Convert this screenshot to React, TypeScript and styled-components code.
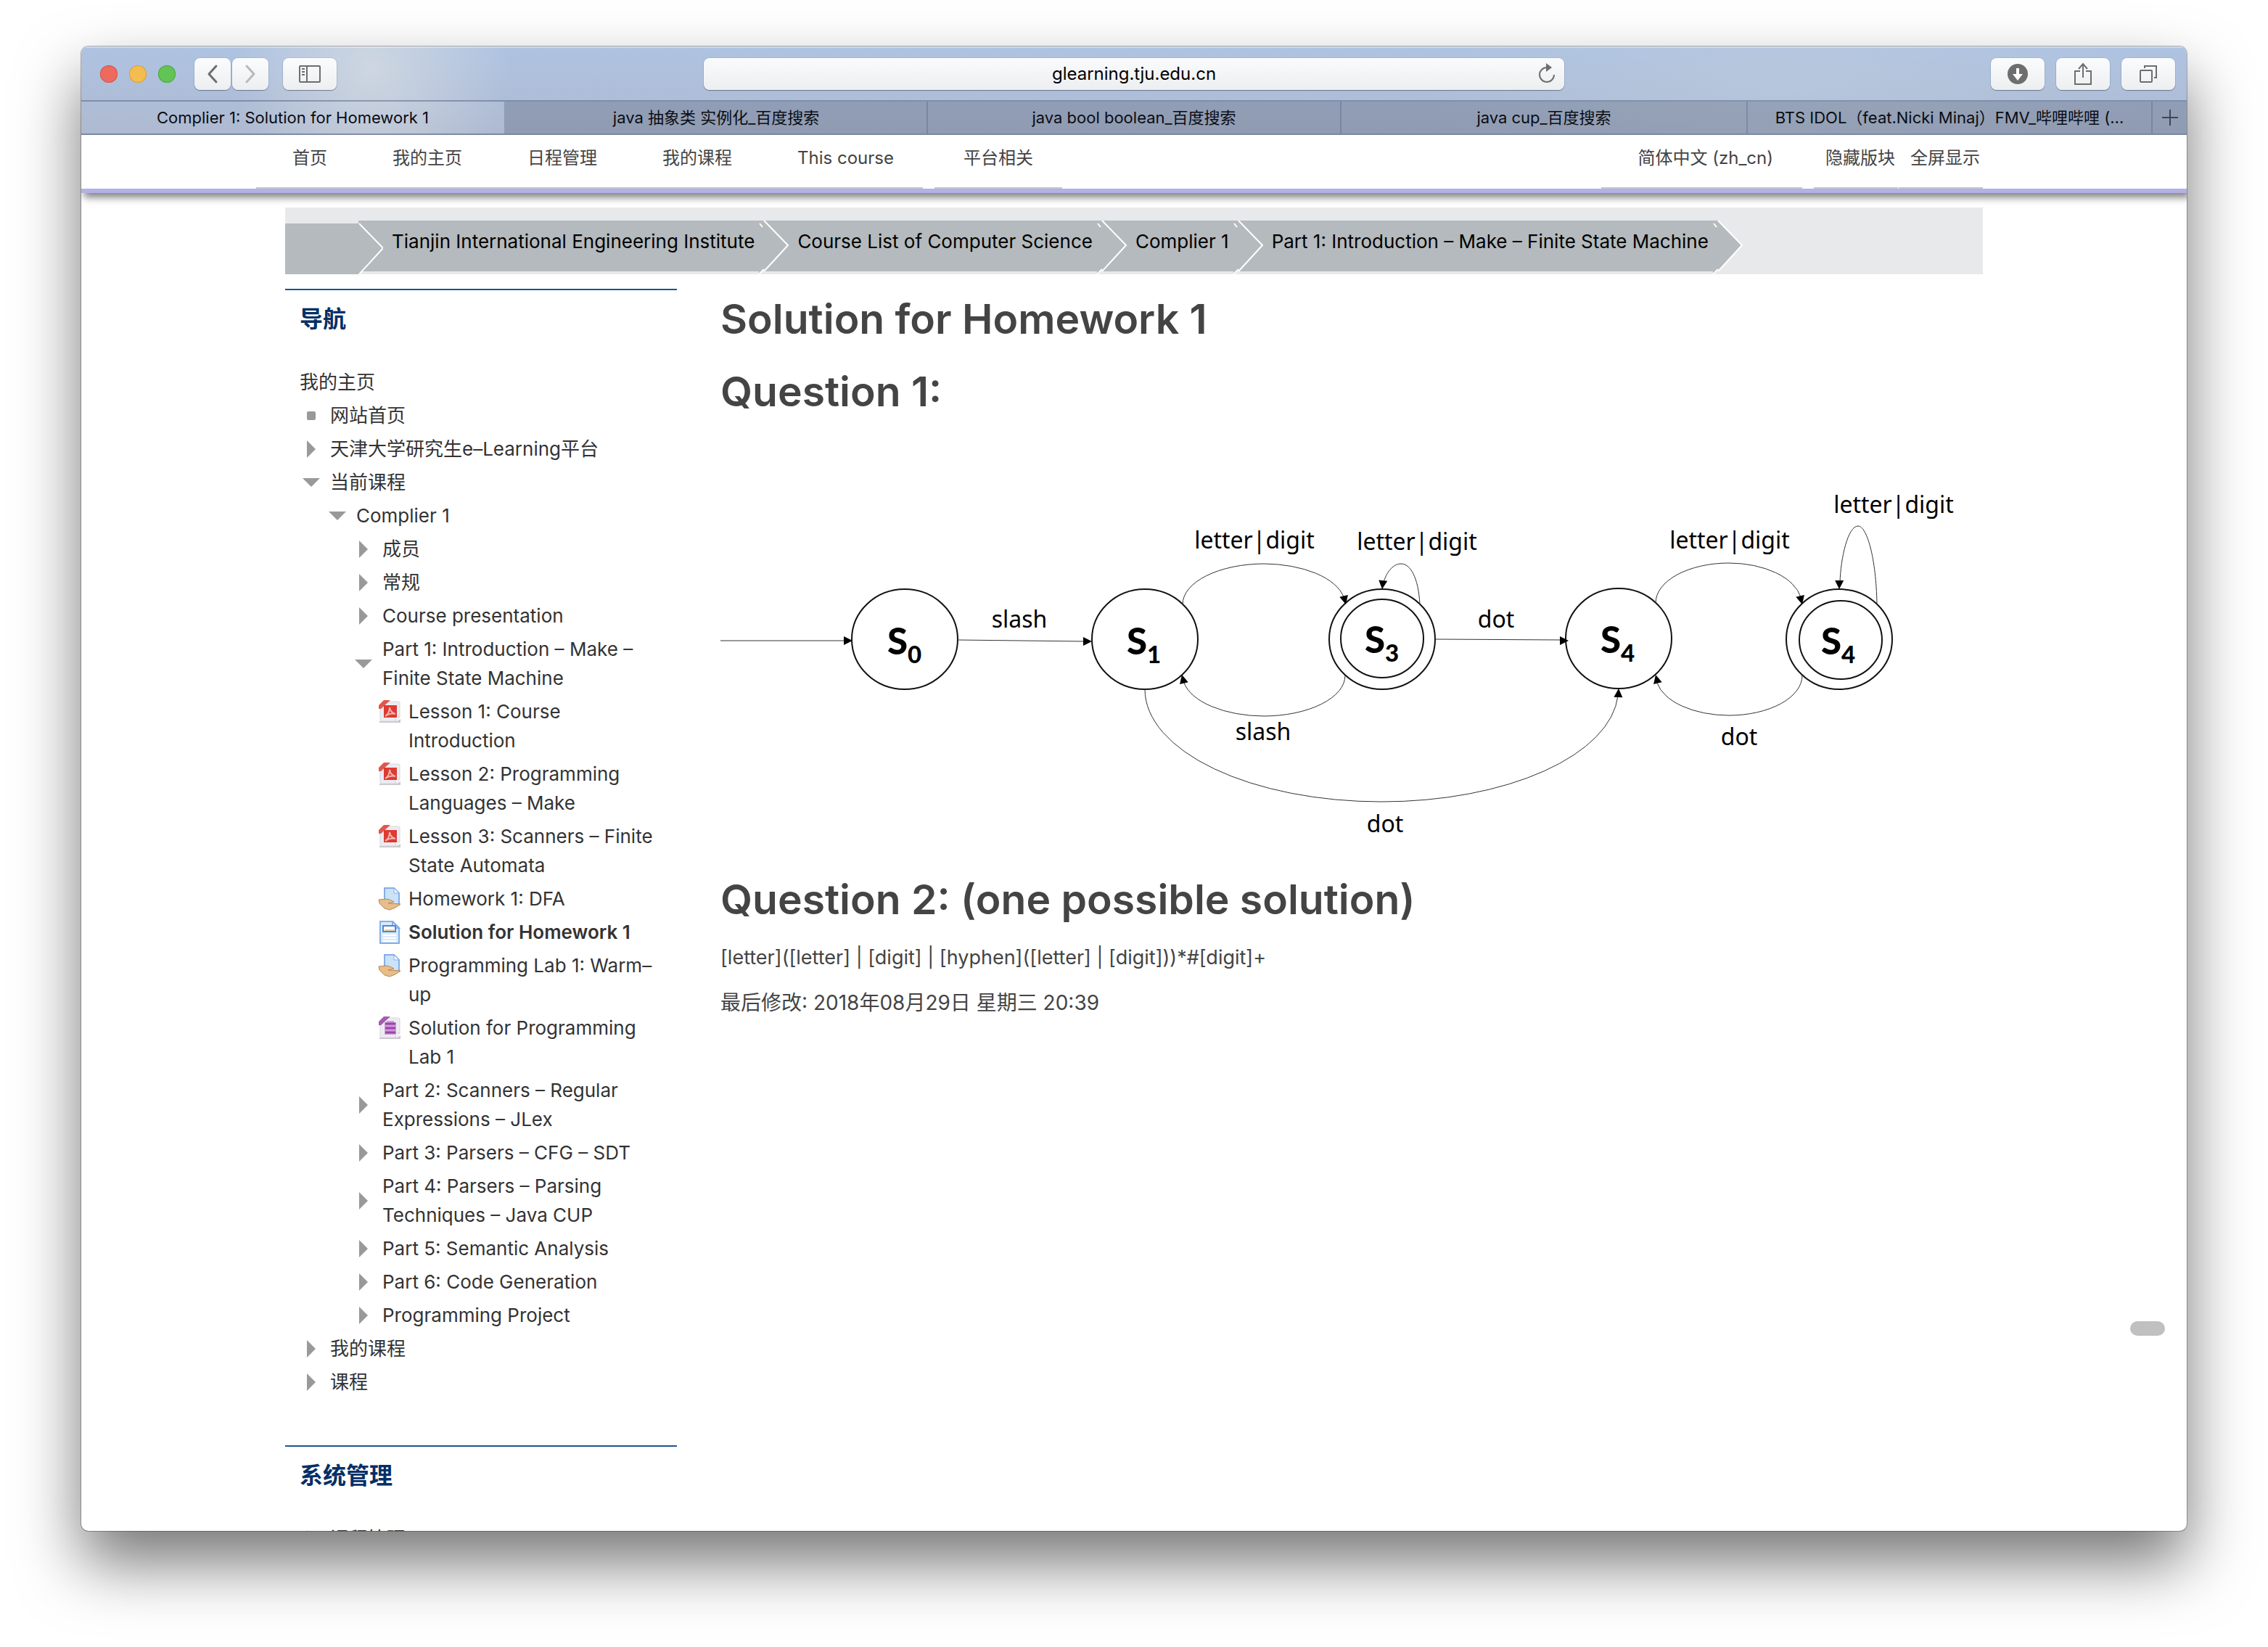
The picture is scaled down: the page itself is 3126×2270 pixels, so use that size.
import React from "react";
import styled, { createGlobalStyle } from "styled-components";

const UI_FONT = `Inter, "Noto Sans CJK SC", "Liberation Sans", sans-serif`;
const STATE_FONT = `Lato, "Noto Sans", sans-serif`;
const LABEL_FONT = `"Noto Sans", "Open Sans", sans-serif`;

const GlobalStyle = createGlobalStyle`
  *, *::before, *::after { box-sizing: border-box; }
  body { margin: 0; background: #fff; font-family: ${UI_FONT}; color: #333; }
  h1, h2, h3, p, ul, ol { margin: 0; padding: 0; }
  ul, ol { list-style: none; }
  a { color: inherit; text-decoration: none; }
  button, input { font: inherit; color: inherit; border: 0; padding: 0; background: none; }
  svg { display: block; }
`;

/* ---------- window ---------- */

const Desktop = styled.div`
  display: flex;
  flex-direction: column;
  height: 100vh;
  padding: 64px 112px 160px;
  overflow: hidden;
`;

const BrowserWindow = styled.div`
  position: relative;
  flex: 1;
  min-height: 0;
  display: flex;
  flex-direction: column;
  overflow: hidden;
  border-radius: 10px;
  background: #fff;
  box-shadow:
    0 0 0 1px rgba(0, 0, 0, 0.28),
    0 44px 88px rgba(0, 0, 0, 0.54);
`;

const Chrome = styled.header`
  flex: none;
  background:
    radial-gradient(ellipse 190px 190px at 400px 30px, rgba(216, 221, 226, 0.75), rgba(205, 208, 212, 0) 100%),
    radial-gradient(ellipse 500px 160px at 2350px 50px, rgba(190, 204, 220, 0.55), rgba(190, 204, 220, 0) 100%),
    linear-gradient(#aec3e2, #aebad0);
`;

const Toolbar = styled.div`
  display: grid;
  grid-template-columns: 1fr minmax(400px, 1186px) 1fr;
  align-items: center;
  height: 74px;
  padding: 2px 16px 0;
  box-shadow: inset 0 2px 0 rgba(255, 255, 255, 0.35);
`;

const ToolGroup = styled.div<{ $end?: boolean }>`
  display: flex;
  align-items: center;
  gap: 16px;
  justify-content: ${(p) => (p.$end ? "flex-end" : "flex-start")};
`;

const TrafficLights = styled.div`
  display: flex;
  gap: 16px;
  margin: 0 10px;
`;

const Light = styled.button<{ $fill: string; $ring: string }>`
  width: 24px;
  height: 24px;
  border-radius: 50%;
  background: ${(p) => p.$fill};
  box-shadow: inset 0 0 0 1px ${(p) => p.$ring};
`;

const Segmented = styled.div`
  display: flex;
  gap: 2px;
  margin-right: 4px;
`;

const ToolButton = styled.button<{ $narrow?: boolean }>`
  display: grid;
  place-items: center;
  width: ${(p) => (p.$narrow ? 50 : 74)}px;
  height: 44px;
  border-radius: 8px;
  background: linear-gradient(#fbfcfe, #eceef0);
  box-shadow: 0 1px 1px rgba(60, 70, 95, 0.55), 0 0 0 1px rgba(90, 110, 150, 0.15);
  color: #6e6e6e;
`;

const AddressBar = styled.form`
  display: grid;
  grid-template-columns: 48px 1fr 48px;
  align-items: center;
  height: 44px;
  border-radius: 8px;
  background: linear-gradient(#fafbfd, #eceef0);
  box-shadow: 0 1px 1px rgba(60, 70, 95, 0.55), 0 0 0 1px rgba(90, 110, 150, 0.15);
`;

const AddressInput = styled.input`
  grid-column: 2;
  min-width: 0;
  text-align: center;
  font-size: 24px;
  line-height: 40px;
  color: #000;
  outline: none;
`;

const ReloadButton = styled.button`
  display: grid;
  place-items: center;
  height: 44px;
  color: #6e6e6e;
`;

const TabStrip = styled.div`
  display: grid;
  grid-template-columns: 585fr 582fr 570fr 560fr 558fr 47px;
  height: 48px;
  border-top: 2px solid rgba(70, 85, 120, 0.45);
  border-bottom: 2px solid rgba(70, 85, 120, 0.5);
`;

const Tab = styled.button<{ $active?: boolean }>`
  min-width: 0;
  padding: 0 20px;
  overflow: hidden;
  text-overflow: ellipsis;
  white-space: nowrap;
  font-size: 22px;
  line-height: 44px;
  color: #0a0c14;
  background: ${(p) => (p.$active ? "transparent" : "rgba(50, 60, 80, 0.24)")};
  border-right: 2px solid rgba(70, 85, 120, 0.3);
`;

const NewTab = styled(Tab)`
  display: grid;
  place-items: center;
  padding: 0;
  border-right: 0;
  color: #3e4654;
`;

/* ---------- page ---------- */

const Viewport = styled.div`
  flex: 1;
  min-height: 0;
  overflow: hidden;
`;

const ScrollThumb = styled.div`
  position: absolute;
  right: 30px;
  bottom: 269px;
  width: 48px;
  height: 20px;
  border-radius: 10px;
  background: #c0c0c0;
`;

const SiteBar = styled.div`
  border-bottom: 6px solid #b3b1e6;
  box-shadow: 4px 6px 10px rgba(0, 0, 0, 0.5);
`;

const Container = styled.div`
  width: min(100% - 160px, 2340px);
  margin: 0 auto;
`;

const SiteNav = styled(Container).attrs({ as: "nav" })`
  display: flex;
  gap: 16px;
  height: 74px;
  font-size: 24px;
  line-height: 40px;
  color: #444;
  white-space: nowrap;
`;

const MenuGroup = styled.div<{ $first?: boolean; $right?: boolean }>`
  display: flex;
  gap: 90px;
  padding: 12px 40px 0 ${(p) => (p.$first || p.$right ? 50 : 40)}px;
  margin-left: ${(p) => (p.$first ? "-40px" : p.$right ? "auto" : "0")};
  border-bottom: 2px solid #c8c8c8;
`;

const ToggleGroup = styled.div`
  display: flex;
  gap: 1px;
`;

const ToggleLink = styled.a`
  padding: 12px 4px 0 16px;
  border-bottom: 2px solid #c8c8c8;
`;

const Breadcrumb = styled.ol`
  display: flex;
  align-items: stretch;
  height: 92px;
  margin-top: 20px;
  padding-top: 18px;
  background: #e8e9eb;
  overflow: hidden;
`;

const Crumb = styled.li`
  display: flex;
  flex: none;
`;

const CrumbLink = styled.a`
  height: 70px;
  padding: 0 6px 0 12px;
  background: #b4babd;
  font-size: 26px;
  line-height: 58px;
  color: #000;
  white-space: nowrap;
`;

const CrumbRoot = styled.a`
  width: 101px;
  height: 70px;
  margin-top: 4px;
  background: #b4babd;
`;

const Columns = styled.div`
  display: grid;
  grid-template-columns: 540px minmax(0, 1fr);
  gap: 60px;
  margin-top: 20px;
`;

const Block = styled.section`
  padding: 20px;
  margin-bottom: 47px;
  border-top: 2px solid #1c5490;
`;

const BlockTitle = styled.h2`
  margin-bottom: 47px;
  font-size: 32px;
  font-weight: 700;
  line-height: 40px;
  color: #042f66;
`;

const Tree = styled.ul<{ $nested?: boolean }>`
  display: flex;
  flex-direction: column;
  gap: 6px;
  padding-left: ${(p) => (p.$nested ? 36 : 0)}px;
  margin-top: ${(p) => (p.$nested ? 6 : 0)}px;
  font-size: 26px;
  line-height: 40px;
  color: #333;
`;

const TreeRow = styled.div<{ $top?: boolean }>`
  display: grid;
  grid-template-columns: 32px 1fr;
  column-gap: 10px;
  align-items: ${(p) => (p.$top ? "start" : "center")};
`;

const Marker = styled.span`
  display: grid;
  place-items: center;
  height: 40px;
`;

const TreeLink = styled.a<{ $current?: boolean }>`
  font-weight: ${(p) => (p.$current ? 600 : 400)};
`;

const Article = styled.main`
  padding-top: 2px;
  color: #444;
`;

const Heading = styled.h1`
  margin-bottom: 20px;
  font-size: 57px;
  font-weight: 600;
  line-height: 80px;
`;

const Diagram = styled.svg`
  width: 100%;
  height: auto;
  margin: 62px 0 18px;
`;

const Paragraph = styled.p`
  margin-bottom: 22px;
  font-size: 27px;
  line-height: 40px;
`;

const ModifiedNote = styled(Paragraph)`
  font-size: 28px;
`;

const StateName = styled.text`
  font: 900 51px ${STATE_FONT};
`;

const StateIndex = styled.tspan`
  font-size: 33px;
`;

const EdgeLabel = styled.text`
  font: 400 32px ${LABEL_FONT};
  text-anchor: middle;
`;

/* ---------- icons ---------- */

const Chevron = ({ forward }: { forward?: boolean }) => (
  <svg width="16" height="28" viewBox="0 0 16 28" fill="none" stroke={forward ? "#b9b9bb" : "#6e6e6e"} strokeWidth="3" strokeLinecap="round" strokeLinejoin="round">
    <path d={forward ? "M3 3 L13 14 L3 25" : "M13 3 L3 14 L13 25"} />
  </svg>
);

const SidebarIcon = () => (
  <svg width="32" height="26" viewBox="0 0 32 26" fill="none" stroke="currentColor" strokeWidth="2">
    <rect x="2" y="2" width="28" height="22" rx="1" />
    <path d="M12 2 V24 M5 6 H9 M5 10 H9 M5 14 H9" />
  </svg>
);

const DownloadIcon = () => (
  <svg width="30" height="30" viewBox="0 0 30 30">
    <circle cx="15" cy="15" r="14" fill="currentColor" />
    <path d="M13 7 H17 V15 H22 L15 24 L8 15 H13 Z" fill="#fff" />
  </svg>
);

const ShareIcon = () => (
  <svg width="26" height="32" viewBox="0 0 26 32" fill="none" stroke="currentColor" strokeWidth="2">
    <path d="M9 12 H2 V30 H24 V12 H17 M13 21 V3 M7 9 L13 2 L19 9" />
  </svg>
);

const TabsIcon = () => (
  <svg width="26" height="26" viewBox="0 0 26 26" fill="none" stroke="currentColor" strokeWidth="2">
    <rect x="2" y="8" width="16" height="16" rx="1" />
    <path d="M8 5 V2 H24 V18 H21" />
  </svg>
);

const ReloadIcon = () => (
  <svg width="26" height="30" viewBox="0 0 26 30">
    <path d="M13 6 A10 10 0 1 0 23 16" fill="none" stroke="currentColor" strokeWidth="2" />
    <path d="M12 0 L20 6 L12 12 Z" fill="currentColor" />
  </svg>
);

const PlusIcon = () => (
  <svg width="24" height="24" viewBox="0 0 24 24" stroke="currentColor" strokeWidth="2">
    <path d="M12 1 V23 M1 12 H23" />
  </svg>
);

const RootArrow = () => (
  <svg width="34" height="74" viewBox="0 0 34 74">
    <rect width="34" height="70" fill="#b4babd" />
    <path d="M0 4 L34 38 L0 74 Z" fill="#b4babd" />
    <path d="M1 4 L34 38 L1 74" fill="none" stroke="#fff" strokeWidth="2" />
  </svg>
);

const CrumbArrow = ({ last }: { last?: boolean }) => (
  <svg width="41" height="74" viewBox="0 0 41 74">
    {last ? <path d="M0 0 H7 L41 34 L7 70 H0 Z" fill="#b4babd" /> : <rect width="41" height="70" fill="#b4babd" />}
    <path d="M0 70 H4 L0 74 Z" fill="#b4babd" />
    <path d="M7 0 L40 34 L7 70 M1 4 L5 9 M0 74 L7 67" fill="none" stroke="#fff" strokeWidth="2" />
  </svg>
);

type IconKind = "leaf" | "closed" | "open" | "pdf" | "assign" | "page" | "archive";

const FileBase = ({ color }: { color: string }) => (
  <>
    <path d="M2 29 H26 L31 26 V31 H2 Z" fill="#c9c9cd" />
    <path d="M7 2 H28 Q30 2 30 4 V23 L24 29 H5 Q3 29 3 27 V8 Z" fill="#ececf2" stroke="#d6d6dc" />
    <path d="M24 29 V23 H30 Z" fill="#fff" stroke="#d0d0d6" />
    <path d="M1 12 V7 L8 0 H17 L4 12 Z" fill={color} />
  </>
);

const TreeIcon = ({ kind }: { kind: IconKind }) => {
  switch (kind) {
    case "leaf":
      return <svg width="12" height="12"><rect width="12" height="12" rx="2" fill="#999" /></svg>;
    case "closed":
      return <svg width="12" height="24"><path d="M0 0 L12 12 L0 24 Z" fill="#999" /></svg>;
    case "open":
      return <svg width="24" height="12"><path d="M0 0 H24 L12 12 Z" fill="#999" /></svg>;
    case "pdf":
      return (
        <svg width="32" height="32" viewBox="0 0 32 32">
          <FileBase color="#e2574c" />
          <rect x="8" y="7" width="18" height="17" fill="#dc3b32" />
          <path d="M10 22 Q16 18 16 10 Q17 17 24 19 Q17 17 10 22" fill="none" stroke="#f3b0aa" strokeWidth="2" />
        </svg>
      );
    case "archive":
      return (
        <svg width="32" height="32" viewBox="0 0 32 32">
          <FileBase color="#a45cb0" />
          <path d="M12 6 H22 V8 H25 V25 H9 V8 H12 Z" fill="#cf9bd8" />
          <path d="M10 10 H24 M10 16 H24 M10 22 H24" stroke="#9a45a8" strokeWidth="3" />
        </svg>
      );
    case "page":
      return (
        <svg width="32" height="32" viewBox="0 0 32 32">
          <path d="M3 1 H20 L29 10 V31 H3 Z" fill="#d9ebfc" stroke="#86ade8" strokeWidth="2" />
          <path d="M20 1 V10 H29 Z" fill="#eef6ff" stroke="#86ade8" strokeWidth="2" />
          <rect x="7" y="7" width="17" height="8" fill="#fff" stroke="#4f84d6" strokeWidth="2" />
          <path d="M9 13 H22" stroke="#e8cf9a" strokeWidth="2" />
          <path d="M7 20 H25 M7 24 H25 M7 28 H25" stroke="#fff" strokeWidth="2" />
        </svg>
      );
    case "assign":
      return (
        <svg width="32" height="32" viewBox="0 0 32 32">
          <path d="M9 1 H22 L29 8 V24 H9 Z" fill="#cbe3f8" stroke="#86ade8" strokeWidth="2" />
          <path d="M22 1 V8 H29 Z" fill="#f2f8ff" stroke="#86ade8" />
          <path d="M1 17 L12 16 Q18 17 22 20 L14 22 L31 23 Q24 29 16 31 L9 29 L2 22 Z" fill="#e8bd8c" stroke="#b98652" />
        </svg>
      );
  }
};

/* ---------- navigation tree ---------- */

type Node = { label: string; kind: IconKind; current?: boolean; children?: Node[] };

const NAVIGATION: Node[] = [
  { label: "网站首页", kind: "leaf" },
  { label: "天津大学研究生e–Learning平台", kind: "closed" },
  {
    label: "当前课程",
    kind: "open",
    children: [
      {
        label: "Complier 1",
        kind: "open",
        children: [
          { label: "成员", kind: "closed" },
          { label: "常规", kind: "closed" },
          { label: "Course presentation", kind: "closed" },
          {
            label: "Part 1: Introduction – Make – Finite State Machine",
            kind: "open",
            children: [
              { label: "Lesson 1: Course Introduction", kind: "pdf" },
              { label: "Lesson 2: Programming Languages – Make", kind: "pdf" },
              { label: "Lesson 3: Scanners – Finite State Automata", kind: "pdf" },
              { label: "Homework 1: DFA", kind: "assign" },
              { label: "Solution for Homework 1", kind: "page", current: true },
              { label: "Programming Lab 1: Warm–up", kind: "assign" },
              { label: "Solution for Programming Lab 1", kind: "archive" },
            ],
          },
          { label: "Part 2: Scanners – Regular Expressions – JLex", kind: "closed" },
          { label: "Part 3: Parsers – CFG – SDT", kind: "closed" },
          { label: "Part 4: Parsers – Parsing Techniques – Java CUP", kind: "closed" },
          { label: "Part 5: Semantic Analysis", kind: "closed" },
          { label: "Part 6: Code Generation", kind: "closed" },
          { label: "Programming Project", kind: "closed" },
        ],
      },
    ],
  },
  { label: "我的课程", kind: "closed" },
  { label: "课程", kind: "closed" },
];

const isArrow = (kind: IconKind) => kind === "leaf" || kind === "closed" || kind === "open";

const TreeItems = ({ nodes }: { nodes: Node[] }) => (
  <>
    {nodes.map((node) => (
      <li key={node.label}>
        <TreeRow $top={!isArrow(node.kind)}>
          <Marker><TreeIcon kind={node.kind} /></Marker>
          <TreeLink href="#" $current={node.current}>{node.label}</TreeLink>
        </TreeRow>
        {node.children && <Tree $nested><TreeItems nodes={node.children} /></Tree>}
      </li>
    ))}
  </>
);

/* ---------- state machine ---------- */

const STATES = [
  { x: 1247, y: 880, index: "0", nameX: 1223, base: 901 },
  { x: 1578, y: 880, index: "1", nameX: 1553, base: 901 },
  { x: 1905, y: 880, index: "3", nameX: 1881, base: 899, inner: [1905, 879] },
  { x: 2231, y: 879, index: "4", nameX: 2206, base: 899 },
  { x: 2535, y: 880, index: "4", nameX: 2510, base: 901, inner: [2537, 881] },
];

const EDGES = [
  "M993 882 H1166",
  "M1320 881 L1496 883",
  "M1978 880 L2152 881",
  "M1630 832 A113 56 0 0 1 1742 776 A113 56 0 0 1 1852 822",
  "M1854 930 A113 56 0 0 1 1742 986 A113 56 0 0 1 1632 940",
  "M1957 832 C1955 795 1944 776 1931 776 C1919 776 1910 790 1907 802",
  "M2282 830 A101 55 0 0 1 2383 775 A101 57 0 0 1 2482 822",
  "M2484 930 A101 55 0 0 1 2383 985 A101 55 0 0 1 2284 940",
  "M2587 832 C2586 768 2573 724 2561 724 C2547 724 2537 768 2536 802",
  "M1578 949 A326 155 0 0 0 1904 1104 A326 155 0 0 0 2230 958",
];

const HEADS = [
  [1175, 882, 0], [1505, 883, 0], [2162, 882, 0],
  [1855, 832, 76], [1629, 929, -104], [1905, 811, 96],
  [2484, 832, 76], [2282, 929, -104], [2535, 811, 91], [2231, 948, -87],
];

const LABELS: [string, number, number][] = [
  ["slash", 1405, 864], ["letter|digit", 1729, 755], ["letter|digit", 1953, 757],
  ["slash", 1741, 1019], ["dot", 2062, 864], ["letter|digit", 2384, 755],
  ["letter|digit", 2610, 706], ["dot", 2397, 1026], ["dot", 1909, 1146],
];

const StateMachine = () => (
  <Diagram viewBox="993 641 1740 540" role="img" aria-label="Finite state machine">
    <g fill="none" stroke="#111" strokeWidth="2">
      {STATES.map((s) => (
        <g key={s.x}>
          <ellipse cx={s.x} cy={s.y} rx="73" ry="69" />
          {s.inner && <ellipse cx={s.inner[0]} cy={s.inner[1]} rx="57" ry="54" />}
        </g>
      ))}
    </g>
    <g fill="none" stroke="#333" strokeWidth="1">
      {EDGES.map((d) => <path key={d} d={d} />)}
    </g>
    {HEADS.map(([x, y, angle]) => (
      <path key={`${x}-${y}`} d="M0 0 L-12 -6 V6 Z" transform={`translate(${x} ${y}) rotate(${angle})`} />
    ))}
    {STATES.map((s) => (
      <StateName key={s.x} x={s.nameX} y={s.base}>
        S<StateIndex dy="12">{s.index}</StateIndex>
      </StateName>
    ))}
    {LABELS.map(([text, x, y]) => <EdgeLabel key={`${x}-${y}`} x={x} y={y}>{text}</EdgeLabel>)}
  </Diagram>
);

const CRUMBS = [
  "Tianjin International Engineering Institute",
  "Course List of Computer Science",
  "Complier 1",
  "Part 1: Introduction – Make – Finite State Machine",
];

const TABS = [
  "Complier 1: Solution for Homework 1",
  "java 抽象类 实例化_百度搜索",
  "java bool boolean_百度搜索",
  "java cup_百度搜索",
  "BTS IDOL（feat.Nicki Minaj）FMV_哔哩哔哩 (…",
];

export default function App() {
  return (
    <>
      <GlobalStyle />
      <Desktop>
        <BrowserWindow>
          <Chrome>
            <Toolbar>
              <ToolGroup>
                <TrafficLights>
                  <Light $fill="#ee6a5f" $ring="#d2544b" aria-label="Close" />
                  <Light $fill="#f5bd4f" $ring="#d9a03c" aria-label="Minimise" />
                  <Light $fill="#61c455" $ring="#4ca73f" aria-label="Zoom" />
                </TrafficLights>
                <Segmented>
                  <ToolButton $narrow aria-label="Back"><Chevron /></ToolButton>
                  <ToolButton $narrow aria-label="Forward"><Chevron forward /></ToolButton>
                </Segmented>
                <ToolButton aria-label="Sidebar"><SidebarIcon /></ToolButton>
              </ToolGroup>
              <AddressBar onSubmit={(e) => e.preventDefault()}>
                <AddressInput aria-label="Address" defaultValue="glearning.tju.edu.cn" />
                <ReloadButton type="button" aria-label="Reload"><ReloadIcon /></ReloadButton>
              </AddressBar>
              <ToolGroup $end>
                <ToolButton aria-label="Downloads"><DownloadIcon /></ToolButton>
                <ToolButton aria-label="Share"><ShareIcon /></ToolButton>
                <ToolButton aria-label="Show tabs"><TabsIcon /></ToolButton>
              </ToolGroup>
            </Toolbar>
            <TabStrip>
              {TABS.map((title, i) => <Tab key={title} $active={i === 0}>{title}</Tab>)}
              <NewTab aria-label="New tab"><PlusIcon /></NewTab>
            </TabStrip>
          </Chrome>

          <Viewport>
            <SiteBar>
              <SiteNav>
                <MenuGroup $first>
                  <a href="#">首页</a>
                  <a href="#">我的主页</a>
                  <a href="#">日程管理</a>
                  <a href="#">我的课程</a>
                  <a href="#">This course</a>
                </MenuGroup>
                <MenuGroup><a href="#">平台相关</a></MenuGroup>
                <MenuGroup $right><a href="#">简体中文 (zh_cn)</a></MenuGroup>
                <ToggleGroup>
                  <ToggleLink href="#">隐藏版块</ToggleLink>
                  <ToggleLink href="#">全屏显示</ToggleLink>
                </ToggleGroup>
              </SiteNav>
            </SiteBar>

            <Container>
              <Breadcrumb>
                <Crumb><CrumbRoot href="#" aria-label="首页" /><RootArrow /></Crumb>
                {CRUMBS.map((label, i) => (
                  <Crumb key={label}>
                    <CrumbLink href="#">{label}</CrumbLink>
                    <CrumbArrow last={i === CRUMBS.length - 1} />
                  </Crumb>
                ))}
              </Breadcrumb>

              <Columns>
                <aside>
                  <Block>
                    <BlockTitle>导航</BlockTitle>
                    <Tree>
                      <li><TreeLink href="#">我的主页</TreeLink></li>
                      <TreeItems nodes={NAVIGATION} />
                    </Tree>
                  </Block>
                  <Block>
                    <BlockTitle>系统管理</BlockTitle>
                    <Tree><TreeItems nodes={[{ label: "课程管理", kind: "closed" }]} /></Tree>
                  </Block>
                </aside>

                <Article>
                  <Heading>Solution for Homework 1</Heading>
                  <Heading as="h2">Question 1:</Heading>
                  <StateMachine />
                  <Heading as="h2">Question 2: (one possible solution)</Heading>
                  <Paragraph>[letter]([letter] | [digit] | [hyphen]([letter] | [digit]))*#[digit]+</Paragraph>
                  <ModifiedNote>最后修改: 2018年08月29日 星期三 20:39</ModifiedNote>
                </Article>
              </Columns>
            </Container>
          </Viewport>
          <ScrollThumb />
        </BrowserWindow>
      </Desktop>
    </>
  );
}
